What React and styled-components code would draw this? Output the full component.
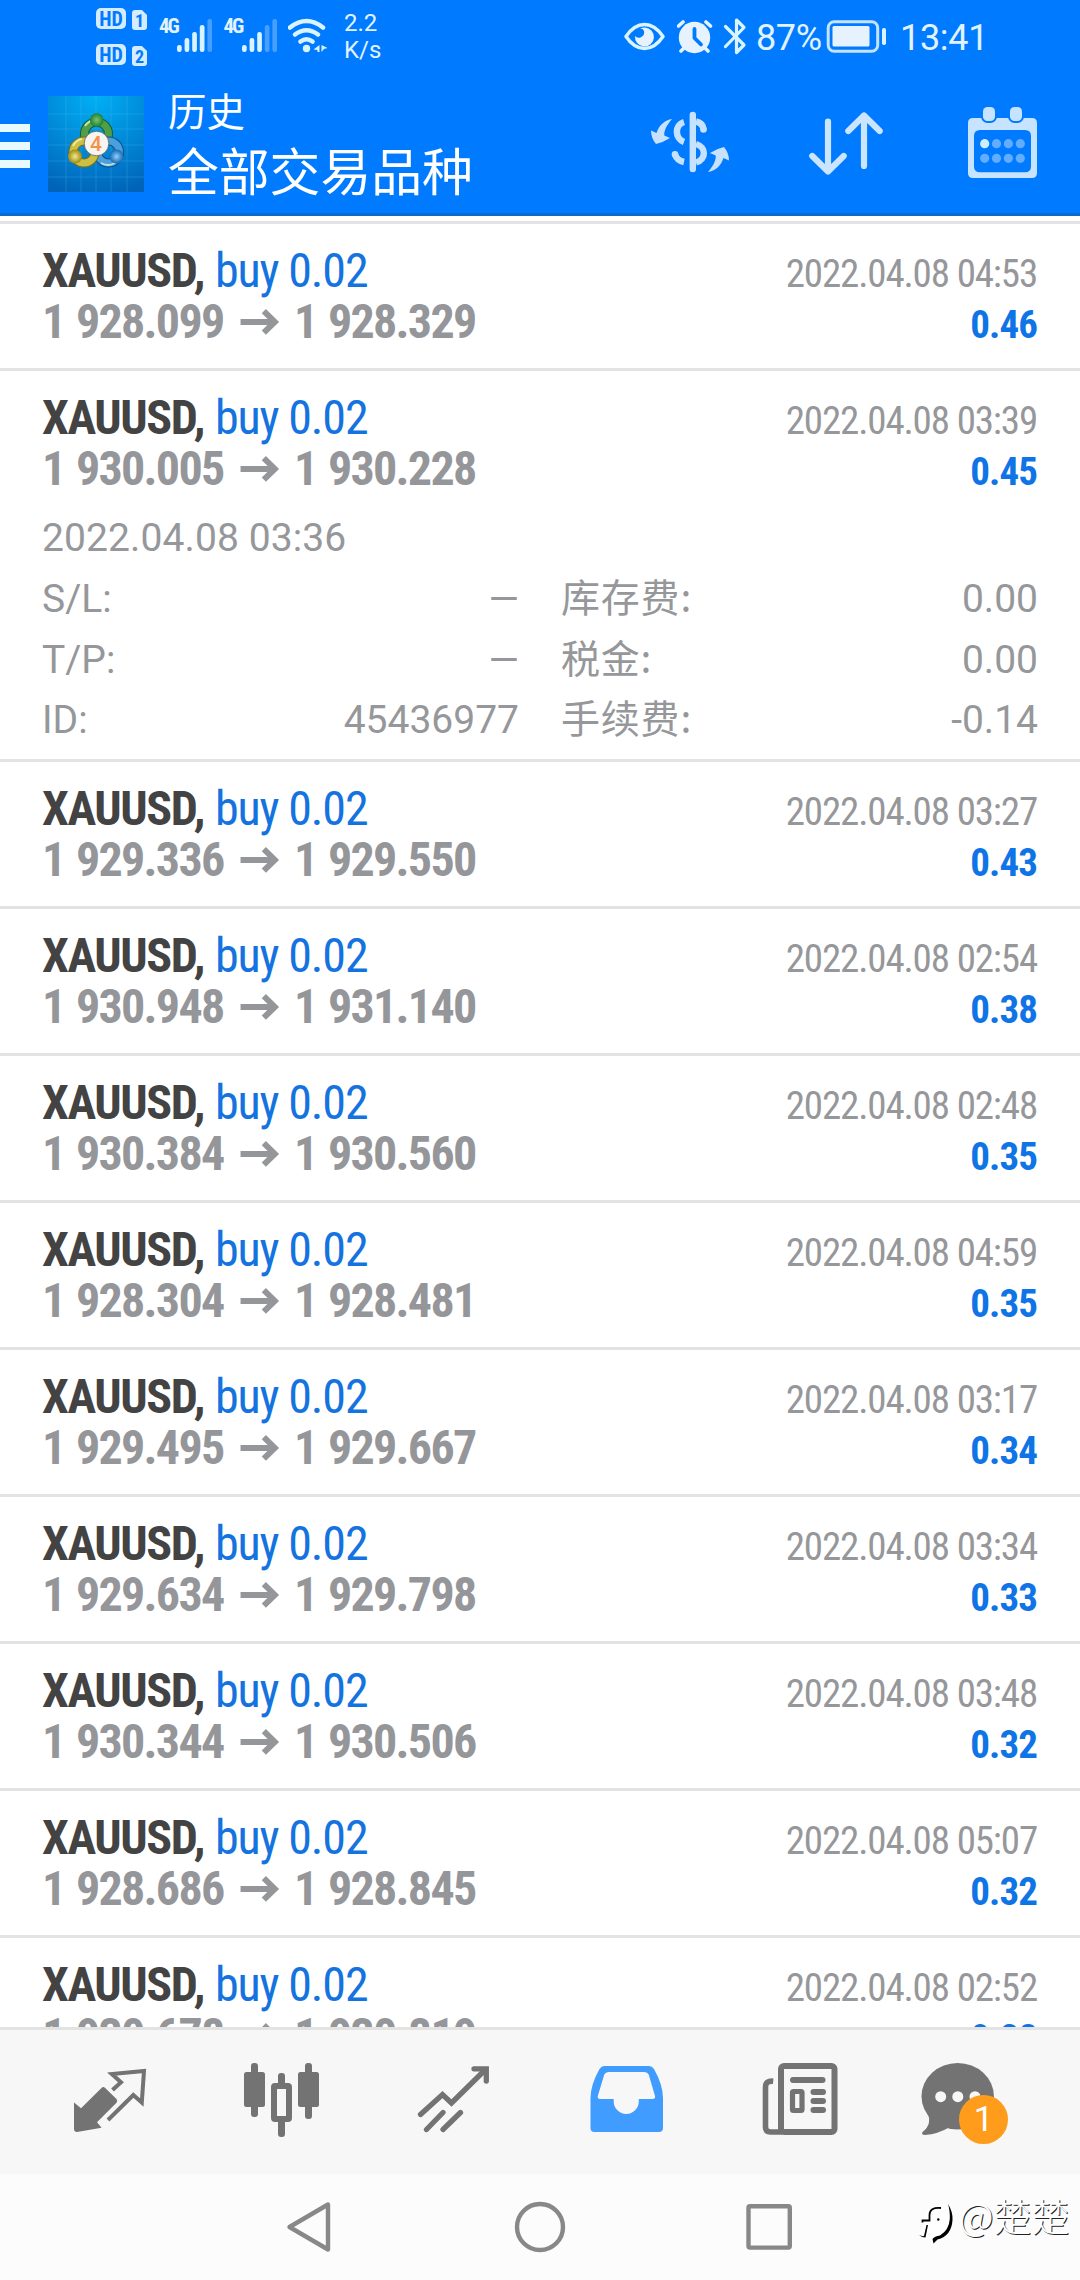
import React from 'react';
import styled, { createGlobalStyle } from 'styled-components';

const GlobalStyle = createGlobalStyle`
  * {
    box-sizing: border-box;
  }
  body {
    margin: 0;
    background: #fdfdfd;
    font-family: Roboto, "Noto Sans CJK SC", sans-serif;
  }
  svg {
    display: block;
    flex: none;
  }
`;

const Screen = styled.div`
  width: 1080px;
  height: 2280px;
  display: flex;
  flex-direction: column;
  overflow: hidden;
`;

/* ---------- status bar ---------- */

const StatusBar = styled.div`
  height: 75px;
  flex: none;
  display: flex;
  background: #007aff;
  color: #e0f3ff;
  padding: 0 97px 0 96px;
`;
const SimColumn = styled.div`
  width: 63px;
  padding-top: 8px;
  display: flex;
  flex-direction: column;
  gap: 15px;
`;
const SimRow = styled.div`
  display: flex;
  gap: 6px;
  height: 21px;
`;
const HdBadge = styled.span`
  width: 30px;
  height: 21px;
  border-radius: 5px;
  background: #d5ecff;
  color: #007aff;
  font: 700 20px/22px "Roboto Condensed", sans-serif;
  text-align: center;
`;
const SimNumber = styled.span`
  width: 15px;
  height: 20px;
  margin-top: 2px;
  border-radius: 3px;
  background: #d5ecff;
  clip-path: polygon(0 0, 66% 0, 100% 25%, 100% 100%, 0 100%);
  color: #007aff;
  font: 700 18px/21px "Roboto Condensed", sans-serif;
  text-align: center;
`;
const Signal = styled.div`
  width: 64.5px;
  display: flex;
`;
const NetworkType = styled.span`
  width: 18px;
  padding-top: 14px;
  font: 700 21px/25px "Roboto Condensed", sans-serif;
  letter-spacing: -2px;
  white-space: nowrap;
`;
const Speed = styled.div`
  margin-left: 15px;
  padding-top: 10px;
  font-size: 24px;
  line-height: 27px;
`;
const StatusRight = styled.div`
  margin-left: auto;
  display: flex;
`;
const StatusText = styled.span`
  width: ${props => props.$width}px;
  margin-left: ${props => props.$gap}px;
  padding-top: 17px;
  font-size: 36px;
  line-height: 43px;
  font-stretch: ${props => props.$stretch}%;
  letter-spacing: ${props => props.$spacing}px;
  white-space: nowrap;
`;
const StatusIcon = styled.span`
  margin-right: ${props => props.$gap || 0}px;
`;

/* ---------- toolbar ---------- */

const Toolbar = styled.header`
  height: 141px;
  flex: none;
  display: flex;
  align-items: center;
  background: #007aff;
  border-bottom: 3px solid #0b6ad0;
`;
const MenuButton = styled.div`
  width: 48px;
  display: flex;
  flex-direction: column;
  gap: 10px;
  padding-top: 4px;
`;
const MenuLine = styled.span`
  width: 30px;
  height: 8px;
  background: #e9faff;
`;
const Titles = styled.div`
  margin-left: 24px;
  padding-bottom: 4px;
  display: flex;
  flex-direction: column;
  gap: 7px;
  color: #fff;
  font-family: "Noto Sans CJK SC", sans-serif;
`;
const Caption = styled.span`
  font-size: 38.5px;
  line-height: 46px;
`;
const Title = styled.span`
  font-size: 50.8px;
  line-height: 60px;
`;
const Actions = styled.div`
  margin-left: auto;
  display: flex;
`;

/* ---------- history list ---------- */

const List = styled.main`
  flex: 1;
  min-height: 0;
  overflow: hidden;
  background: #fff;
  padding-top: 5px;
`;
const Deal = styled.div`
  border-top: 3px solid #e3e3e3;
  padding: 21px 42px ${props => (props.$open ? 8 : 21)}px;
`;
const Line = styled.div`
  height: 51px;
  line-height: 51px;
  display: flex;
  justify-content: space-between;
  align-items: baseline;
  font-family: "Roboto Condensed", sans-serif;
  font-size: 48px;
  white-space: nowrap;
`;
const SymbolName = styled.span`
  display: inline-block;
  width: 173px;
  color: #434343;
  font-weight: 700;
  letter-spacing: -1.4px;
`;
const Action = styled.span`
  color: #1473df;
  letter-spacing: -1.15px;
`;
const Prices = styled.span`
  display: flex;
  align-items: baseline;
  color: #95969a;
  font-weight: 700;
  letter-spacing: -1.7px;
  word-spacing: 2px;
`;
const Price = styled.span`
  width: 181px;
`;
const PriceArrow = styled.svg`
  width: 42px;
  height: 29px;
  margin: 0 14px 0 15px;
`;
const Time = styled.span`
  margin-right: 1px;
  color: #96979a;
  font-size: 39px;
  letter-spacing: -1.15px;
`;
const Profit = styled.span`
  margin-right: 1px;
  color: #0f74e6;
  font-size: 39px;
  font-weight: 700;
  letter-spacing: -0.9px;
`;
const Details = styled.div`
  margin-top: 14px;
  display: grid;
  grid-template-columns: 1fr 1fr;
  column-gap: 42px;
  grid-auto-rows: 60.75px;
  color: #96979a;
  font-size: 39px;
  line-height: 61px;
`;
const OpenTime = styled.div`
  grid-column: 1 / -1;
  letter-spacing: 0.1px;
`;
const Field = styled.div`
  display: flex;
  justify-content: space-between;
  align-items: baseline;
`;
const Label = styled.span`
  ${props => props.$cjk && `
    font-family: "Noto Sans CJK SC", sans-serif;
    line-height: 50px;
    letter-spacing: 0.8px;
  `}
`;

/* ---------- bottom bars ---------- */

const TabBar = styled.nav`
  height: 147px;
  flex: none;
  display: flex;
  padding: 0 24px;
  background: #f7f7f7;
  border-top: 3px solid #e3e3e3;
`;
const Tab = styled.div`
  position: relative;
  width: 172px;
  height: 144px;
  color: #737373;
`;
const Badge = styled.span`
  position: absolute;
  left: 75px;
  top: 65px;
  width: 49px;
  height: 49px;
  border-radius: 50%;
  background: #ff9c1b;
  color: #fff;
  font-size: 35px;
  line-height: 49px;
  text-align: center;
`;
const SystemNav = styled.div`
  position: relative;
  height: 106px;
  flex: none;
  display: flex;
  justify-content: center;
  background: #fcfcfc;
`;
const Watermark = styled.div`
  position: absolute;
  left: 915px;
  top: 16px;
  display: flex;
  color: #fff;
  font: 300 38px/50px "Noto Sans CJK SC", sans-serif;
  text-shadow: 1px 1px 0 #222;
  white-space: nowrap;
`;

const deals = [
  { time: '04:53', from: '1 928.099', to: '1 928.329', profit: '0.46' },
  {
    time: '03:39', from: '1 930.005', to: '1 930.228', profit: '0.45',
    details: {
      opened: '2022.04.08 03:36',
      fields: [
        ['S/L:', '—'], ['库存费:', '0.00'],
        ['T/P:', '—'], ['税金:', '0.00'],
        ['ID:', '45436977'], ['手续费:', '-0.14'],
      ],
    },
  },
  { time: '03:27', from: '1 929.336', to: '1 929.550', profit: '0.43' },
  { time: '02:54', from: '1 930.948', to: '1 931.140', profit: '0.38' },
  { time: '02:48', from: '1 930.384', to: '1 930.560', profit: '0.35' },
  { time: '04:59', from: '1 928.304', to: '1 928.481', profit: '0.35' },
  { time: '03:17', from: '1 929.495', to: '1 929.667', profit: '0.34' },
  { time: '03:34', from: '1 929.634', to: '1 929.798', profit: '0.33' },
  { time: '03:48', from: '1 930.344', to: '1 930.506', profit: '0.32' },
  { time: '05:07', from: '1 928.686', to: '1 928.845', profit: '0.32' },
  { time: '02:52', from: '1 930.678', to: '1 930.819', profit: '0.28' },
];

const SignalBars = ({ level }) => (
  <svg width="35" height="75" viewBox="0 0 35 75">
    {[45, 38, 32, 25, 19].map((top, i) => (
      <rect key={top} x={i * 7.6} y={top} width="4.7" height={52 - top} rx="2.2"
        fill={i < level ? '#d9f4ff' : '#479fff'} />
    ))}
  </svg>
);

const WifiIcon = () => (
  <svg width="41" height="75" viewBox="288 0 41 75" fill="none" stroke="#d9f4ff" strokeWidth="4.6" strokeLinecap="round">
    <path d="M290 27.5 Q306.5 14.5 323 27.5" />
    <path d="M295 34.5 Q306.5 26 318 34.5" />
    <path d="M300.5 41.5 Q306.5 37 312.5 41.5" />
    <circle cx="306.5" cy="48.5" r="3.7" fill="#d9f4ff" stroke="none" />
    <path d="M319.5 45 V52 H317.5 V50 L313.5 49.5Z M321.5 52 V45 L327.5 48 L324 49Z" fill="#d9f4ff" stroke="none" />
  </svg>
);

const EyeIcon = () => (
  <svg width="42" height="75" viewBox="624 0 42 75">
    <path d="M626 36.5 Q634 24.5 644.5 24.5 T663 36.5 Q655 48.5 644.5 48.5 T626 36.5Z" fill="none" stroke="#d9f4ff" strokeWidth="3.4" strokeLinejoin="round" />
    <path d="M645 27.5 A9.5 9.5 0 1 1 635 36 Q637 38.5 640.5 37.5 Q645 35.5 644 31 Q643 28.5 640 28.6 Q642 27.5 645 27.5Z" fill="#e6f3ff" />
  </svg>
);

const AlarmIcon = () => (
  <svg width="36" height="75" viewBox="677 0 36 75">
    <circle cx="694.5" cy="37.5" r="15.7" fill="#e6f3ff" />
    <path d="M678.5 26 L683 22 M710.5 26 L706 22 M681 51 L685 47 M708 51 L704 47" stroke="#e6f3ff" strokeWidth="3.6" strokeLinecap="round" />
    <path d="M694.5 29 V38 L701 44.5" fill="none" stroke="#007aff" strokeWidth="3.8" strokeLinecap="round" strokeLinejoin="round" />
  </svg>
);

const BluetoothIcon = () => (
  <svg width="24" height="75" viewBox="723 0 24 75">
    <path d="M725.5 26.5 L744 45 L736.5 52.5 V20 L744 27.5 L725.5 46.5" fill="none" stroke="#d9f4ff" strokeWidth="3.2" strokeLinecap="round" strokeLinejoin="round" />
  </svg>
);

const BatteryIcon = () => (
  <svg width="61" height="75" viewBox="826 0 61 75">
    <rect x="828.2" y="21.8" width="49.5" height="29.5" rx="6" fill="none" stroke="#c3e3ff" strokeWidth="3" />
    <rect x="832.5" y="26" width="37" height="20.5" rx="1.5" fill="#e6f3ff" />
    <rect x="882" y="28" width="4" height="17" rx="1.8" fill="#d9f4ff" />
  </svg>
);

const AppLogo = () => (
  <svg width="96" height="96" viewBox="0 0 96 96">
    <defs>
      <radialGradient id="sky" cx="0.5" cy="0" r="1.05">
        <stop offset="0" stopColor="#00b0f5" />
        <stop offset="0.5" stopColor="#008bd9" />
        <stop offset="1" stopColor="#0063b8" />
      </radialGradient>
      <radialGradient id="green"><stop offset="0" stopColor="#7cc470" /><stop offset="1" stopColor="#1f7f33" /></radialGradient>
      <radialGradient id="gold"><stop offset="0" stopColor="#f5e88a" /><stop offset="1" stopColor="#9b8a12" /></radialGradient>
      <radialGradient id="blue"><stop offset="0" stopColor="#8fd0ff" /><stop offset="1" stopColor="#1668b0" /></radialGradient>
    </defs>
    <rect width="96" height="96" fill="url(#sky)" />
    <path d="M18 0V96M33 0V96M48 0V96M63 0V96M79 0V96M0 18H96M0 33H96M0 49H96M0 65H96M0 81H96" stroke="#5cc4f5" strokeWidth="0.7" opacity="0.35" />
    <g fill="none">
      <circle cx="48.5" cy="38" r="12" stroke="#15602c" strokeWidth="9" />
      <circle cx="48.5" cy="38" r="12" stroke="#4f9f4a" strokeWidth="7" />
      <circle cx="60.5" cy="56" r="11" stroke="#0c4e8c" strokeWidth="9" />
      <circle cx="60.5" cy="56" r="11" stroke="#4a9fdc" strokeWidth="7" />
      <circle cx="36" cy="56" r="11" stroke="#7c7010" strokeWidth="9" />
      <circle cx="36" cy="56" r="11" stroke="#cdbf42" strokeWidth="7" />
      <path d="M37 30 Q41 24 48 24 M25 50 Q28 44 34 43 M53 67 Q60 71 67 67" stroke="#e9f8d8" strokeWidth="1.8" opacity="0.75" />
    </g>
    <circle cx="48.7" cy="24" r="6.8" fill="url(#green)" />
    <circle cx="27" cy="60.5" r="7" fill="url(#gold)" />
    <circle cx="68.5" cy="60.5" r="7" fill="url(#blue)" />
    <circle cx="48.5" cy="47.5" r="12.3" fill="#f7f4f2" stroke="#5d5d48" strokeWidth="0.8" />
    <text x="48" y="55" textAnchor="middle" fontFamily="Roboto" fontSize="21" fontWeight="500" fill="#f5924a">4</text>
  </svg>
);

const CurrencyIcon = () => (
  <svg width="156" height="138" viewBox="612 75 156 138" fill="none" stroke="#c6e2ff" strokeWidth="6.5">
    <path d="M692.8 115 V169" strokeWidth="6.4" strokeLinecap="round" />
    <path d="M684 122 C674.5 125 674.5 138.5 684 142" />
    <path d="M696 121.5 Q703 123 703.5 129.5" />
    <circle cx="703.5" cy="129.5" r="3.3" fill="#c6e2ff" stroke="none" />
    <path d="M684 162 Q677 160.5 675 154.5" />
    <circle cx="675" cy="154.3" r="3.3" fill="#c6e2ff" stroke="none" />
    <path d="M696 144 C706.5 147 706.5 159.5 696 162.5" />
    <g fill="#c6e2ff" stroke="none">
      <path id="swap" d="M672 119 C666 126 664 131 664.3 135.5 L670 138 Q663 142.5 656 144 Q651 138 651 130.5 L656.5 133 C659 125 665 120 672 119Z" />
      <use href="#swap" transform="rotate(180 690 145.5)" />
    </g>
  </svg>
);

const SortIcon = () => (
  <svg width="156" height="138" viewBox="768 75 156 138" fill="none" stroke="#cbe5ff" strokeWidth="6.2" strokeLinecap="round" strokeLinejoin="round">
    <path d="M828 121.5 V171 M812.3 156 L828 171.5 L843.7 156" />
    <path d="M864 166 V115.5 M848.3 131 L864 115.5 L879.7 131" />
  </svg>
);

const CalendarIcon = () => (
  <svg width="156" height="138" viewBox="924 75 156 138">
    <path fillRule="evenodd" fill="#c6e4ff" d="M973 118H1032Q1037 118 1037 123V173Q1037 178 1032 178H973Q968 178 968 173V123Q968 118 973 118Z M980 130Q974 130 974 136V166.5Q974 172.3 980 172.3H1025Q1031 172.3 1031 166.5V136Q1031 130 1025 130Z" />
    <g fill="#c6e4ff" stroke="#007aff" strokeWidth="4" paintOrder="stroke">
      <rect x="983" y="107" width="12" height="14" rx="4.5" />
      <rect x="1010" y="107" width="12" height="14" rx="4.5" />
    </g>
    {[143.7, 158.3].map(cy => [984.7, 996.5, 1008.4, 1020.3].map(cx => (
      <circle key={cx + cy} cx={cx} cy={cy} r="4.6" fill={cx < 990 && cy < 150 ? '#cdf0ff' : '#62adff'} />
    )))}
  </svg>
);

const TradeIcon = () => (
  <svg width="172" height="144" viewBox="24 2030 172 144">
    <path d="M74 2102.5 L81 2108.3 L101.5 2088 Q103.3 2086 105.2 2088 L116.5 2099 Q118 2101 116.5 2102.8 L97 2122.3 L101.6 2127.7 L77 2132 Q74 2132 74 2129Z" fill="currentColor" />
    <path d="M112.5 2090 L121 2082.3 L111.8 2074 L144 2071 L141.8 2102.5 L133.3 2095 L108 2120" fill="none" stroke="currentColor" strokeWidth="4" />
  </svg>
);

const CandlesIcon = () => (
  <svg width="172" height="144" viewBox="196 2030 172 144" fill="currentColor">
    <rect x="251" y="2063" width="7" height="54" rx="3" />
    <rect x="244" y="2072" width="21" height="35" rx="2.5" />
    <rect x="278" y="2073" width="7" height="14" rx="3" />
    <rect x="278" y="2118" width="7" height="19" rx="3" />
    <rect x="274" y="2086" width="15" height="33" rx="1" fill="none" stroke="currentColor" strokeWidth="6" />
    <rect x="305" y="2063" width="7" height="56" rx="3" />
    <rect x="298" y="2072" width="21" height="35" rx="2.5" />
  </svg>
);

const TrendIcon = () => (
  <svg width="172" height="144" viewBox="368 2030 172 144" fill="none" stroke="currentColor" strokeWidth="5.3" strokeLinecap="round">
    <path d="M420.5 2114.5 L442.5 2094.5 L451.5 2103 L485.5 2069.5" />
    <path d="M474 2068.8 H486.3 V2081" />
    <path d="M443 2112.5 L426.5 2129.5 M460.5 2112.5 L443 2129.5" />
  </svg>
);

const InboxIcon = () => (
  <svg width="172" height="144" viewBox="540 2030 172 144">
    <path fillRule="evenodd" fill="#419cff" d="M604 2066H649Q652 2066 654 2069Q663 2085 663 2098V2128Q663 2132 659 2132H594.5Q590.5 2132 590.5 2128V2098Q590.5 2085 599.5 2069Q601.5 2066 604 2066Z M608.5 2072Q605.5 2072 604.3 2074.5L597.8 2096Q597.3 2099 600 2099H613.7V2101.5A12.5 12.5 0 0 0 638.8 2101.5V2099H652.5Q655.6 2099 655 2096L648.7 2074.5Q647.5 2072 644.5 2072Z" />
  </svg>
);

const NewsIcon = () => (
  <svg width="172" height="144" viewBox="712 2030 172 144" fill="currentColor">
    <rect x="781" y="2066" width="53.5" height="66" rx="3" fill="none" stroke="currentColor" strokeWidth="6" />
    <path d="M773.2 2081.2 Q765.5 2080.5 765.5 2087 V2127 Q765.5 2132 770.5 2132 H782" fill="none" stroke="currentColor" strokeWidth="5.6" />
    <rect x="790" y="2077" width="35.5" height="6" rx="3" />
    <rect x="792.5" y="2091.5" width="9.5" height="19" rx="1" fill="none" stroke="currentColor" strokeWidth="5.2" />
    <rect x="810.5" y="2089" width="15.5" height="6" rx="3" />
    <rect x="810.5" y="2098" width="15.5" height="6" rx="3" />
    <rect x="810.5" y="2107" width="15.5" height="6" rx="3" />
  </svg>
);

const ChatIcon = () => (
  <svg width="172" height="144" viewBox="884 2030 172 144">
    <ellipse cx="957.7" cy="2096.3" rx="36.2" ry="33.3" fill="currentColor" />
    <path d="M927 2112 Q933 2124 922.5 2132 Q921 2135 925 2135 Q938 2134 949 2127.5Z" fill="currentColor" />
    <circle cx="940.7" cy="2096.7" r="5.5" fill="#f7f7f7" />
    <circle cx="957.8" cy="2096.7" r="5.5" fill="#f7f7f7" />
    <circle cx="975" cy="2096.7" r="5.5" fill="#f7f7f7" />
  </svg>
);

const NavIcon = ({ children }) => (
  <svg width="230" height="106" viewBox="0 0 230 106" fill="none" stroke="#888" strokeWidth="4.4" strokeLinejoin="round">
    {children}
  </svg>
);

const FishLogo = () => (
  <svg width="44" height="56" viewBox="915 2190 44 56">
    <path d="M919 2234 Q924 2226 923 2220 Q928 2205 944 2204 Q951 2208 951 2218 Q950 2236 934 2240Z" fill="#fff" />
    <path d="M941 2208 Q929.5 2207 929.5 2215 V2220.5 H922.5 V2222.5" fill="none" stroke="#000" strokeWidth="1.8" />
    <path d="M928 2225 L925.5 2237.5 Q922 2237.5 919 2235 Q922 2236.5 924 2236 L926.5 2225Z M948 2204 Q953 2212 952.5 2220 Q951.5 2236 937.5 2239.5 L933.5 2243.5 L932.5 2239 Q934.5 2236 940 2235.5 Q949 2230 949.8 2219 Q950 2210 948 2204Z" fill="#000" />
    <circle cx="938.3" cy="2219.5" r="1.2" fill="#000" />
  </svg>
);

const DealRow = ({ deal }) => (
  <Deal $open={Boolean(deal.details)}>
    <Line>
      <span>
        <SymbolName>XAUUSD,</SymbolName>
        <Action>buy 0.02</Action>
      </span>
      <Time>2022.04.08 {deal.time}</Time>
    </Line>
    <Line>
      <Prices>
        <Price>{deal.from}</Price>
        <PriceArrow viewBox="0 0 42 33">
          <path d="M0 14.7 H37 M26.5 2.5 L39 14.7 L26.5 27" fill="none" stroke="#95969a" strokeWidth="6.8" />
        </PriceArrow>
        <Price>{deal.to}</Price>
      </Prices>
      <Profit>{deal.profit}</Profit>
    </Line>
    {deal.details && (
      <Details>
        <OpenTime>{deal.details.opened}</OpenTime>
        {deal.details.fields.map(([label, value], i) => (
          <Field key={label}>
            <Label $cjk={i % 2 === 1}>{label}</Label>
            <span>{value}</span>
          </Field>
        ))}
      </Details>
    )}
  </Deal>
);

const App = () => (
  <Screen>
    <GlobalStyle />
    <StatusBar>
      <SimColumn>
        <SimRow><HdBadge>HD</HdBadge><SimNumber>1</SimNumber></SimRow>
        <SimRow><HdBadge>HD</HdBadge><SimNumber>2</SimNumber></SimRow>
      </SimColumn>
      <Signal><NetworkType>4G</NetworkType><SignalBars level={4} /></Signal>
      <Signal><NetworkType>4G</NetworkType><SignalBars level={3} /></Signal>
      <WifiIcon />
      <Speed>2.2<br />K/s</Speed>
      <StatusRight>
        <StatusIcon $gap={11}><EyeIcon /></StatusIcon>
        <StatusIcon $gap={10}><AlarmIcon /></StatusIcon>
        <StatusIcon><BluetoothIcon /></StatusIcon>
        <StatusText $gap={9} $width={70} $stretch={96} $spacing={-0.4}>87%</StatusText>
        <StatusIcon><BatteryIcon /></StatusIcon>
        <StatusText $gap={13} $width={83} $stretch={93} $spacing={-0.3}>13:41</StatusText>
      </StatusRight>
    </StatusBar>

    <Toolbar>
      <MenuButton><MenuLine /><MenuLine /><MenuLine /></MenuButton>
      <AppLogo />
      <Titles>
        <Caption>历史</Caption>
        <Title>全部交易品种</Title>
      </Titles>
      <Actions>
        <CurrencyIcon />
        <SortIcon />
        <CalendarIcon />
      </Actions>
    </Toolbar>

    <List>
      {deals.map(deal => <DealRow key={deal.time} deal={deal} />)}
    </List>

    <TabBar>
      <Tab><TradeIcon /></Tab>
      <Tab><CandlesIcon /></Tab>
      <Tab><TrendIcon /></Tab>
      <Tab><InboxIcon /></Tab>
      <Tab><NewsIcon /></Tab>
      <Tab>
        <ChatIcon />
        <Badge>1</Badge>
      </Tab>
    </TabBar>

    <SystemNav>
      <NavIcon><path d="M94.5 53 L133 30.5 V75.5Z" /></NavIcon>
      <NavIcon><circle cx="115" cy="53" r="23" /></NavIcon>
      <NavIcon><rect x="93.5" y="32.3" width="41.3" height="41.3" rx="1.5" /></NavIcon>
      <Watermark><FishLogo /><span>@楚楚</span></Watermark>
    </SystemNav>
  </Screen>
);

export default App;
